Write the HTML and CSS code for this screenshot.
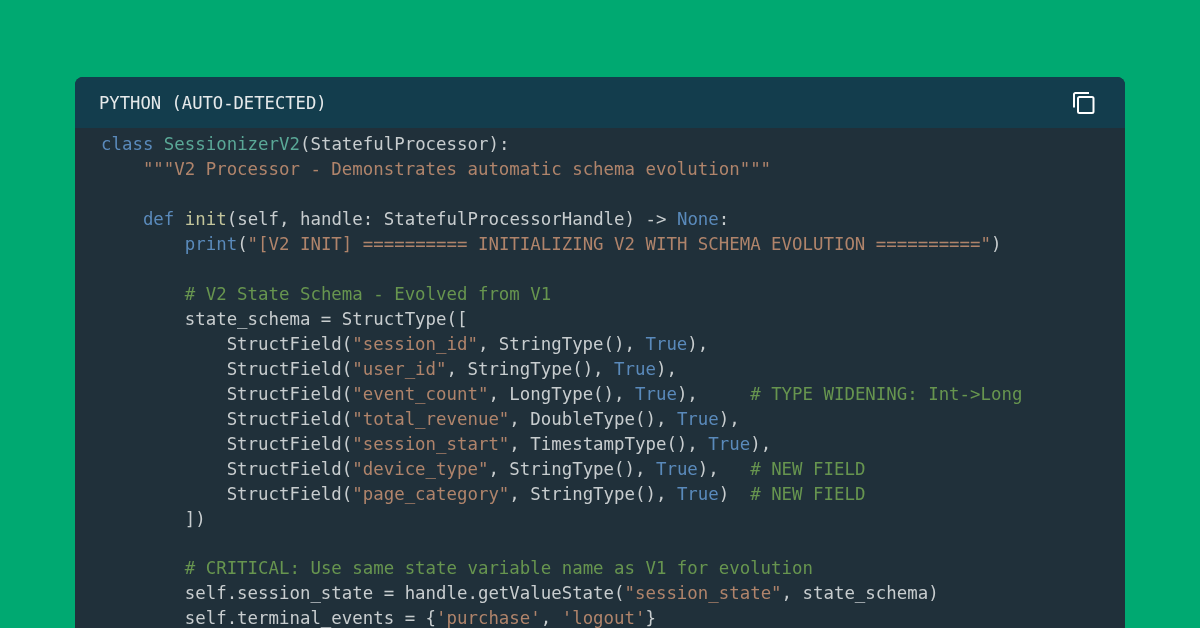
FILE: index.html
```html
<!DOCTYPE html>
<html lang="en">
<head>
<meta charset="utf-8">
<title>Python code</title>
<link rel="stylesheet" href="styles.css">
</head>
<body>
<main class="card">
<header class="bar">
<span class="lang">PYTHON (AUTO-DETECTED)</span>
<svg class="copy" width="24" height="24" viewBox="0 0 24 24" fill="none" stroke="#fff" stroke-width="2"><path d="M2 16.500V3.500Q2 2 3.500 2H17"/><rect x="6" y="6" width="15.500" height="16" rx="1.500"/></svg>
</header>
<pre class="code"><code><span class="k">class</span> <span class="c">SessionizerV2</span>(StatefulProcessor):
    <span class="s">"""V2 Processor - Demonstrates automatic schema evolution"""</span>

    <span class="k">def</span> <span class="f">init</span>(self, handle: StatefulProcessorHandle) -&gt; <span class="k">None</span>:
        <span class="b">print</span>(<span class="s">"[V2 INIT] ========== INITIALIZING V2 WITH SCHEMA EVOLUTION =========="</span>)

        <span class="g"># V2 State Schema - Evolved from V1</span>
        state_schema = StructType([
            StructField(<span class="s">"session_id"</span>, StringType(), <span class="k">True</span>),
            StructField(<span class="s">"user_id"</span>, StringType(), <span class="k">True</span>),
            StructField(<span class="s">"event_count"</span>, LongType(), <span class="k">True</span>),     <span class="g"># TYPE WIDENING: Int-&gt;Long</span>
            StructField(<span class="s">"total_revenue"</span>, DoubleType(), <span class="k">True</span>),
            StructField(<span class="s">"session_start"</span>, TimestampType(), <span class="k">True</span>),
            StructField(<span class="s">"device_type"</span>, StringType(), <span class="k">True</span>),   <span class="g"># NEW FIELD</span>
            StructField(<span class="s">"page_category"</span>, StringType(), <span class="k">True</span>)  <span class="g"># NEW FIELD</span>
        ])

        <span class="g"># CRITICAL: Use same state variable name as V1 for evolution</span>
        self.session_state = handle.getValueState(<span class="s">"session_state"</span>, state_schema)
        self.terminal_events = {<span class="s">'purchase'</span>, <span class="s">'logout'</span>}
</code></pre>
</main>
</body>
</html>
```
FILE: styles.css
```css
html, body {
  margin: 0;
  height: 628px;
  overflow: hidden;
  background: #00a971;
}
body {
  padding-top: 77px;
  box-sizing: border-box;
}
.card {
  width: 1050px;
  height: 551px;
  margin-left: 75px;
  border-radius: 8px 8px 0 0;
  overflow: hidden;
  background: #20303a;
  font-family: "DejaVu Sans Mono", monospace;
}
.bar {
  height: 51px;
  box-sizing: border-box;
  display: flex;
  align-items: center;
  justify-content: space-between;
  padding: 0 29px 0 24px;
  background: #133d4d;
}
.lang {
  color: #e6eaeb;
  font-size: 17.200px;
  filter: blur(0.25px);
}
.copy {
  display: block;
}
.code {
  margin: 0;
  padding: 4px 0 0 26px;
  font-family: inherit;
  font-size: 17.400px;
  line-height: 24.970px;
  color: #c8cdcf;
  filter: blur(0.4px);
}
.code code {
  font-family: inherit;
}
.k { color: #5a8abb; }
.c { color: #5aa897; }
.f { color: #c4c69c; }
.b { color: #5a8abb; }
.s { color: #b0846b; }
.g { color: #67954f; }
```
